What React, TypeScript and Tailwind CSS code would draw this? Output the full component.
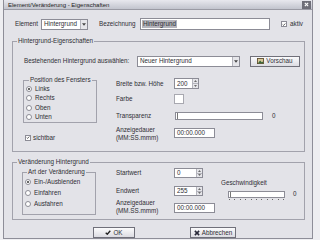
import type { ReactNode } from 'react';

/* ---------------------------------------------------------------- controls -- */

function Radio({ checked = false, children }: { checked?: boolean; children: ReactNode }) {
  return (
    <div className="flex items-center gap-[3px]">
      <span className="flex h-[6px] w-[6px] items-center justify-center rounded-full border border-[#8c8c96] bg-white">
        {checked && <span className="h-[2px] w-[2px] rounded-full bg-[#333]" />}
      </span>
      <span>{children}</span>
    </div>
  );
}

function Check({ checked = false }: { checked?: boolean }) {
  return (
    <span className="flex h-[6px] w-[6px] items-center justify-center border border-[#8c8c96] bg-white">
      {checked && (
        <svg viewBox="0 0 6 6" width={5} height={5} aria-hidden="true">
          <path d="M1 3l1.4 1.4L5 1.5" fill="none" stroke="#333" strokeWidth={1.1} />
        </svg>
      )}
    </span>
  );
}

function Select({ value, className = '' }: { value: string; className?: string }) {
  return (
    <div className={`flex items-center border border-[#8c8c96] bg-white ${className}`}>
      <span className="flex-1 overflow-hidden pl-[2px]">{value}</span>
      <span className="flex h-full w-[7px] items-center justify-center border-l border-[#b4b4bc] bg-[#e6e6ea]">
        <svg viewBox="0 0 5 3" width={4} height={3} aria-hidden="true">
          <path d="M0 0h5L2.5 3z" fill="#444" />
        </svg>
      </span>
    </div>
  );
}

function Spin({ value, className = '' }: { value: string; className?: string }) {
  return (
    <div className={`flex items-center border border-[#8c8c96] bg-white ${className}`}>
      <span className="flex-1 pl-[2px]">{value}</span>
      <span className="flex h-full w-[6px] flex-col border-l border-[#b4b4bc] bg-[#e6e6ea]">
        <span className="flex flex-1 items-center justify-center border-b border-[#b4b4bc]">
          <svg viewBox="0 0 4 2" width={3} height={2} aria-hidden="true">
            <path d="M0 2h4L2 0z" fill="#444" />
          </svg>
        </span>
        <span className="flex flex-1 items-center justify-center">
          <svg viewBox="0 0 4 2" width={3} height={2} aria-hidden="true">
            <path d="M0 0h4L2 2z" fill="#444" />
          </svg>
        </span>
      </span>
    </div>
  );
}

function TextBox({ value, className = '' }: { value: string; className?: string }) {
  return (
    <div className={`flex items-center border border-[#8c8c96] bg-white pl-[2px] ${className}`}>{value}</div>
  );
}

function Track({ className = '' }: { className?: string }) {
  return (
    <div className={`relative border border-[#8c8c96] bg-white ${className}`}>
      <span className="absolute left-[1px] top-0 h-full w-[2px] border-l border-[#777]" />
    </div>
  );
}

function Group({ title, children, className = '' }: { title: string; children: ReactNode; className?: string }) {
  return (
    <fieldset className={`border border-[#a2a2ac] ${className}`}>
      <legend className="ml-[4px] px-[1px] leading-[8px]">{title}</legend>
      {children}
    </fieldset>
  );
}

function Button({ icon, children, className = '' }: { icon: ReactNode; children: ReactNode; className?: string }) {
  return (
    <div
      className={`flex h-[11px] items-center justify-center gap-[2px] border border-[#70707a] bg-gradient-to-b from-[#fbfbfc] to-[#dcdce2] ${className}`}
    >
      {icon}
      <span>{children}</span>
    </div>
  );
}

/* -------------------------------------------------------------------- app -- */

export default function App() {
  return (
    <div className="h-[240px] w-[320px] overflow-hidden whitespace-nowrap bg-[#eeeef1] font-['Liberation_Sans',Arial,sans-serif] text-[6.3px] leading-[8px] text-[#2e2e33]">
      <div className="ml-[3px] flex h-[239px] w-[310px] flex-col border-x border-b border-[#8e8e98] bg-[#e3e3e8]">
        {/* title bar */}
        <div className="flex h-[10px] shrink-0 items-center justify-between border-b border-[#9a9aa4] bg-gradient-to-b from-[#e8e8ee] to-[#c2c4ce] pl-[4px] pr-[1px]">
          <span className="text-[6px] text-[#222]">Element/Veränderung - Eigenschaften</span>
          <span className="flex h-[8px] w-[9px] items-center justify-center bg-[#6e6e78]">
            <svg viewBox="0 0 6 6" width={5} height={5} aria-hidden="true">
              <path d="M1 1l4 4M5 1L1 5" stroke="#fff" strokeWidth={1.3} />
            </svg>
          </span>
        </div>

        {/* element row */}
        <div className="mt-[8px] flex h-[12px] shrink-0 items-center pl-[11px]">
          <span className="w-[26px]">Element</span>
          <Select value="Hintergrund" className="h-[11px] w-[47px]" />
          <span className="ml-[11px] w-[41px]">Bezeichnung</span>
          <div className="flex h-[12px] w-[130px] items-center border border-[#8c8c96] bg-white pl-[1px]">
            <span className="bg-[#b4b4bc] px-[1px]">Hintergrund</span>
          </div>
          <span className="ml-[11px]">
            <Check checked />
          </span>
          <span className="ml-[3px]">aktiv</span>
        </div>

        {/* Hintergrund-Eigenschaften */}
        <Group title="Hintergrund-Eigenschaften" className="mt-[7px] ml-[8px] w-[293px] shrink-0 pb-[9px]">
          <div className="mt-[10px] flex h-[12px] items-center pl-[11px]">
            <span className="w-[113px]">Bestehenden Hintergrund auswählen:</span>
            <Select value="Neuer Hintergrund" className="h-[11px] w-[103px]" />
            <Button
              className="ml-[10px] w-[50px]"
              icon={
                <svg viewBox="0 0 8 7" width={7} height={6} aria-hidden="true">
                  <rect x="0.5" y="0.5" width="7" height="6" fill="#d8c89a" stroke="#5a4a2a" />
                  <path d="M1 6l2.5-3 2 2 1-1 1 2z" fill="#3a6a3a" />
                </svg>
              }
            >
              Vorschau
            </Button>
          </div>

          <div className="flex">
            <div className="ml-[10px] flex w-[74px] flex-col">
              <fieldset className="mt-[9px] border border-[#a2a2ac] pb-[1px] pl-[2px]">
                <legend className="ml-[3px] px-[1px] leading-[8px]">Position des Fensters</legend>
                <div className="flex h-[9px] items-center">
                  <Radio checked>Links</Radio>
                </div>
                <div className="flex h-[10px] items-center">
                  <Radio>Rechts</Radio>
                </div>
                <div className="flex h-[9px] items-center">
                  <Radio>Oben</Radio>
                </div>
                <div className="flex h-[9px] items-center">
                  <Radio>Unten</Radio>
                </div>
              </fieldset>
              <div className="mt-[10px] flex h-[9px] items-center gap-[2px] pl-[2px]">
                <Check checked />
                <span>sichtbar</span>
              </div>
            </div>

            <div className="ml-[19px] flex flex-col pt-[11px]">
              <div className="flex h-[11px] items-center">
                <span className="w-[58px]">Breite bzw. Höhe</span>
                <Spin value="200" className="h-[11px] w-[25px]" />
              </div>
              <div className="mt-[4px] flex h-[11px] items-center">
                <span className="w-[58px]">Farbe</span>
                <span className="h-[10px] w-[10px] border border-[#a8a8b0] bg-white" />
              </div>
              <div className="mt-[7px] flex h-[9px] items-center">
                <span className="w-[59px]">Transparenz</span>
                <Track className="h-[8px] w-[88px]" />
                <span className="ml-[9px]">0</span>
              </div>
              <div className="mt-[6px] flex h-[16px] items-start">
                <span className="w-[58px]">
                  Anzeigedauer
                  <br />
                  (MM:SS.mmm)
                </span>
                <TextBox value="00:00.000" className="mt-[2px] h-[10px] w-[41px]" />
              </div>
            </div>
          </div>
        </Group>

        {/* Veränderung Hintergrund */}
        <Group title="Veränderung Hintergrund" className="mt-[6px] ml-[8px] w-[293px] shrink-0 pb-[4px]">
          <div className="flex">
            <fieldset className="mt-[2px] ml-[9px] w-[74px] border border-[#a2a2ac] pb-[1px] pl-[2px]">
              <legend className="ml-[2px] px-[1px] leading-[8px]">Art der Veränderung</legend>
              <div className="flex h-[11px] items-center">
                <Radio checked>Ein-/Ausblenden</Radio>
              </div>
              <div className="flex h-[11px] items-center">
                <Radio>Einfahren</Radio>
              </div>
              <div className="flex h-[12px] items-center">
                <Radio>Ausfahren</Radio>
              </div>
            </fieldset>

            <div className="ml-[20px] flex flex-col pt-[2px]">
              <div className="flex h-[10px] items-center">
                <span className="w-[58px]">Startwert</span>
                <Spin value="0" className="h-[10px] w-[29px]" />
              </div>
              <div className="mt-[8px] flex h-[10px] items-center">
                <span className="w-[58px]">Endwert</span>
                <Spin value="255" className="h-[10px] w-[29px]" />
              </div>
              <div className="mt-[3px] flex h-[16px] items-start">
                <span className="w-[58px]">
                  Anzeigedauer
                  <br />
                  (MM.SS.mmm)
                </span>
                <TextBox value="00:00.000" className="mt-[4px] h-[10px] w-[41px]" />
              </div>
            </div>

            <div className="ml-[6px] flex flex-col pt-[13px]">
              <span>Geschwindigkeit</span>
              <div className="mt-[3px] flex items-center">
                <div className="ml-[7px] flex flex-col">
                  <Track className="h-[7px] w-[57px]" />
                  <div className="mt-[1px] flex justify-between px-[1px]">
                    {Array.from({ length: 11 }, (_, i) => (
                      <span key={i} className="h-[1px] w-[1px] bg-[#666]" />
                    ))}
                  </div>
                </div>
                <span className="mb-[2px] ml-[8px]">0</span>
              </div>
            </div>
          </div>
        </Group>

        {/* buttons */}
        <div className="mt-[7px] flex shrink-0 pl-[89px]">
          <Button
            className="w-[42px]"
            icon={
              <svg viewBox="0 0 8 7" width={6} height={5} aria-hidden="true">
                <path d="M0.8 3.8 3 6 7.2 1" fill="none" stroke="#222" strokeWidth={1.8} />
              </svg>
            }
          >
            OK
          </Button>
          <Button
            className="ml-[55px] w-[46px]"
            icon={
              <svg viewBox="0 0 7 7" width={6} height={6} aria-hidden="true">
                <path d="M1 1l5 5M6 1L1 6" stroke="#2a2a3a" strokeWidth={1.8} />
              </svg>
            }
          >
            Abbrechen
          </Button>
        </div>
      </div>
    </div>
  );
}
